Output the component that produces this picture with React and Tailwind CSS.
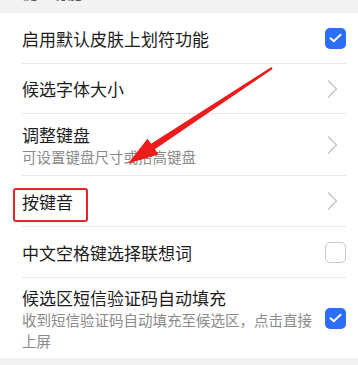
import React from 'react'

// 勾选框
function Check({ on }) {
  if (!on) {
    return <div className="w-[21px] h-[21px] rounded-[5px] border-[1.5px] border-[#c8c8c8] bg-white shrink-0" />
  }
  return (
    <div className="w-[21px] h-[21px] rounded-[5px] bg-[#2a6ef5] flex items-center justify-center shrink-0">
      <svg width="13" height="10" viewBox="0 0 13 10" fill="none">
        <path d="M1.5 5.2 L4.8 8.2 L11.5 1.8" stroke="white" strokeWidth="2" strokeLinecap="round" strokeLinejoin="round" />
      </svg>
    </div>
  )
}

function Chevron() {
  return (
    <svg width="12" height="20" viewBox="0 0 12 20" fill="none" className="shrink-0 mr-[8px]">
      <path d="M2 1.5 L10.5 10 L2 18.5" stroke="#c4c4c4" strokeWidth="1.3" />
    </svg>
  )
}

function Row({ h, title, sub, right, last, boxed }) {
  return (
    <div className={`flex items-center pl-[22px] pr-[12px] ${h}`}>
      <div className={`flex-1 h-full flex items-center gap-[10px] ${last ? '' : 'border-b border-[#e8e8e8]'}`}>
        <div className="flex-1 flex flex-col">
          <span className="text-[17px] leading-[23px] text-[#1c1c1c]">{title}</span>
          {sub && <span className="text-[14.5px] leading-[21px] text-[#8a8a8a]">{sub}</span>}
        </div>
        {right}
      </div>
    </div>
  )
}

export default function App() {
  return (
    <div className="w-[358px] h-[365px] bg-[#f2f2f2] relative overflow-hidden" style={{ fontFamily: '"Noto Sans CJK SC", "Noto Sans", sans-serif' }}>
      {/* header — mostly cut off */}
      <div className="h-[13px] overflow-hidden pl-[22px]">
        <div className="text-[15px] leading-[20px] text-[#555] -mt-[17px]">键盘功能</div>
      </div>

      <div className="bg-white">
        <Row h="h-[51px]" title="启用默认皮肤上划符功能" right={<Check on />} />
        <Row h="h-[50px]" title="候选字体大小" right={<Chevron />} />
        <Row h="h-[62px]" title="调整键盘" sub="可设置键盘尺寸或抬高键盘" right={<Chevron />} />
        <Row h="h-[51px]" title="按键音" right={<Chevron />} />
        <Row h="h-[51px]" title="中文空格键选择联想词" right={<Check />} />
        <Row h="h-[80px]" title="候选区短信验证码自动填充" sub="收到短信验证码自动填充至候选区，点击直接上屏" right={<Check on />} last />
      </div>

      {/* red highlight box */}
      <div className="absolute left-[13px] top-[188px] w-[75px] h-[34px] border-2 border-[#e8262a] rounded-[3px]" />

      {/* red arrow */}
      <svg className="absolute left-0 top-0" width="358" height="365" viewBox="0 0 358 365">
        <polygon points="272.6,68.9 154.9,149.2 158.5,154.5 128,163.5 147.5,138.8 151.1,143.8 271.4,67.1" fill="#ec1c1c" />
      </svg>
    </div>
  )
}
